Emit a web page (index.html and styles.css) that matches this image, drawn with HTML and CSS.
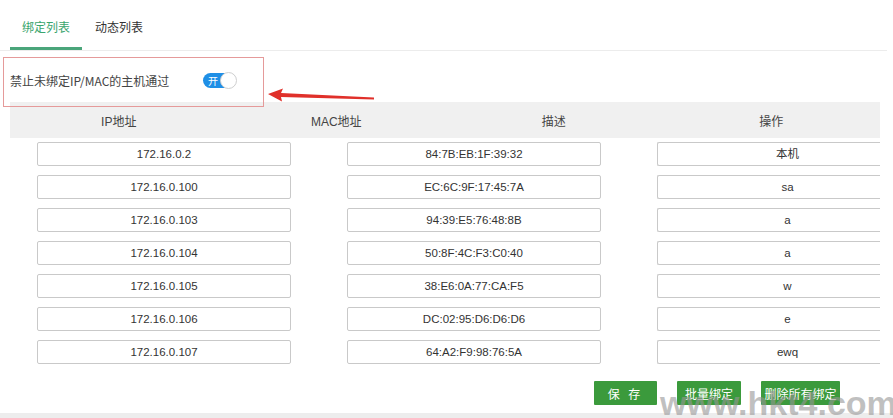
FILE: index.html
```html
<!DOCTYPE html>
<html lang="zh">
<head>
<meta charset="utf-8">
<link rel="stylesheet" href="styles.css">
</head>
<body>
<div class="page">
  <div class="tabs">
    <div class="tab active">绑定列表</div>
    <div class="tab">动态列表</div>
  </div>
  <div class="switch-row">
    <span class="switch-label">禁止未绑定IP/MAC的主机通过</span>
    <span class="toggle"><span class="toggle-text">开</span><span class="knob"></span></span>
  </div>
  <div class="table">
    <div class="thead">
      <div>IP地址</div><div>MAC地址</div><div>描述</div><div>操作</div>
    </div>
    <div class="tbody">
      <div class="row"><div class="cell">172.16.0.2</div><div class="cell">84:7B:EB:1F:39:32</div><div class="cell">本机</div></div>
      <div class="row"><div class="cell">172.16.0.100</div><div class="cell">EC:6C:9F:17:45:7A</div><div class="cell">sa</div></div>
      <div class="row"><div class="cell">172.16.0.103</div><div class="cell">94:39:E5:76:48:8B</div><div class="cell">a</div></div>
      <div class="row"><div class="cell">172.16.0.104</div><div class="cell">50:8F:4C:F3:C0:40</div><div class="cell">a</div></div>
      <div class="row"><div class="cell">172.16.0.105</div><div class="cell">38:E6:0A:77:CA:F5</div><div class="cell">w</div></div>
      <div class="row"><div class="cell">172.16.0.106</div><div class="cell">DC:02:95:D6:D6:D6</div><div class="cell">e</div></div>
      <div class="row"><div class="cell">172.16.0.107</div><div class="cell">64:A2:F9:98:76:5A</div><div class="cell">ewq</div></div>
    </div>
  </div>
  <div class="actions">
    <button class="btn btn-save">保 存</button>
    <button class="btn">批量绑定</button>
    <button class="btn btn-wide">删除所有绑定</button>
  </div>
  <div class="footer-bar"></div>

  <div class="annot-box"></div>
  <svg class="annot-arrow" width="120" height="20" viewBox="0 0 120 20">
    <path d="M2 6 L17 0.5 L15 5 L108 9.5 L108 11.5 L15 9 L16 13.5 Z" fill="#e0302a"/>
  </svg>
  <div class="watermark">www.hkt4.com</div>
</div>
</body>
</html>
```
FILE: styles.css
```css
* { box-sizing: border-box; }
html, body { margin: 0; padding: 0; background: #fff; }
body {
  width: 893px;
  height: 418px;
  overflow: hidden;
  font-family: "Liberation Sans", "Noto Sans CJK SC", sans-serif;
  font-size: 12px;
  color: #333;
}
.page { position: relative; width: 893px; height: 418px; }

.tabs {
  display: flex;
  width: 887px;
  height: 51px;
  padding-left: 10px;
  border-bottom: 1px solid #ececec;
}
.tab {
  height: 50px;
  padding: 0 12px 12px;
  display: flex;
  align-items: flex-end;
  font-family: "Noto Sans CJK SC", sans-serif;
  font-size: 12px;
  line-height: 16px;
  color: #333;
  border-bottom: 3px solid transparent;
  margin-right: 1px;
}
.tab.active { color: #3aa56e; border-bottom-color: #4aa57a; }

.switch-row {
  height: 51px;
  display: flex;
  align-items: center;
  padding-left: 10px;
  padding-top: 7px;
}
.switch-label {
  font-family: "Noto Sans CJK SC", sans-serif;
  font-size: 12px;
  color: #444;
  width: 193px;
}
.toggle {
  position: relative;
  display: inline-flex;
  align-items: center;
  width: 33px;
  height: 15px;
  border-radius: 8px;
  background: #1f8fe6;
}
.toggle-text {
  font-family: "Noto Sans CJK SC", sans-serif;
  font-size: 10px;
  line-height: 15px;
  color: #fff;
  padding-left: 5px;
}
.knob {
  position: absolute;
  right: -1px;
  top: -1px;
  width: 17px;
  height: 17px;
  border-radius: 50%;
  background: #fff;
  border: 1px solid #cfcfcf;
}

.table { margin-left: 10px; width: 870px; overflow: hidden; }
.thead {
  display: grid;
  grid-template-columns: 1fr 1fr 1fr 1fr;
  height: 36px;
  background: #f0f0f0;
  align-items: center;
  text-align: center;
  font-family: "Liberation Sans", "Noto Sans CJK SC", sans-serif;
  color: #444;
}
.tbody {
  display: flex;
  flex-direction: column;
  gap: 9px;
  padding-top: 4px;
}
.row {
  display: flex;
  gap: 56px;
  padding-left: 27px;
}
.cell {
  flex: 0 0 254px;
  height: 24px;
  border: 1px solid #c9c9c9;
  border-radius: 2px;
  background: #fff;
  text-align: center;
  line-height: 22px;
  font-size: 11.5px;
  color: #333;
}
.row .cell:last-child { flex-basis: 260px; border-right: none; }

.actions {
  display: flex;
  gap: 20px;
  padding-left: 594px;
  margin-top: 17px;
}
.btn {
  height: 24px;
  width: 64px;
  border: none;
  border-radius: 1px;
  background: #3b9a3c;
  color: #fff;
  font-family: "Noto Sans CJK SC", sans-serif;
  font-size: 12px;
  padding: 0;
}
.btn-save { width: 63px; letter-spacing: 3px; }
.btn-wide { width: 79px; }

.footer-bar {
  position: absolute;
  left: 0;
  top: 413px;
  width: 893px;
  height: 5px;
  background: #ededed;
}

.annot-box {
  position: absolute;
  left: 3px;
  top: 57px;
  width: 261px;
  height: 50px;
  border: 1px solid #e59a9a;
}
.annot-arrow {
  position: absolute;
  left: 266px;
  top: 88px;
}
.watermark {
  position: absolute;
  left: 660px;
  top: 386px;
  font-family: "Liberation Sans", sans-serif;
  font-weight: bold;
  font-size: 34px;
  line-height: 34px;
  color: rgba(150, 150, 150, 0.6);
  white-space: nowrap;
}
```
